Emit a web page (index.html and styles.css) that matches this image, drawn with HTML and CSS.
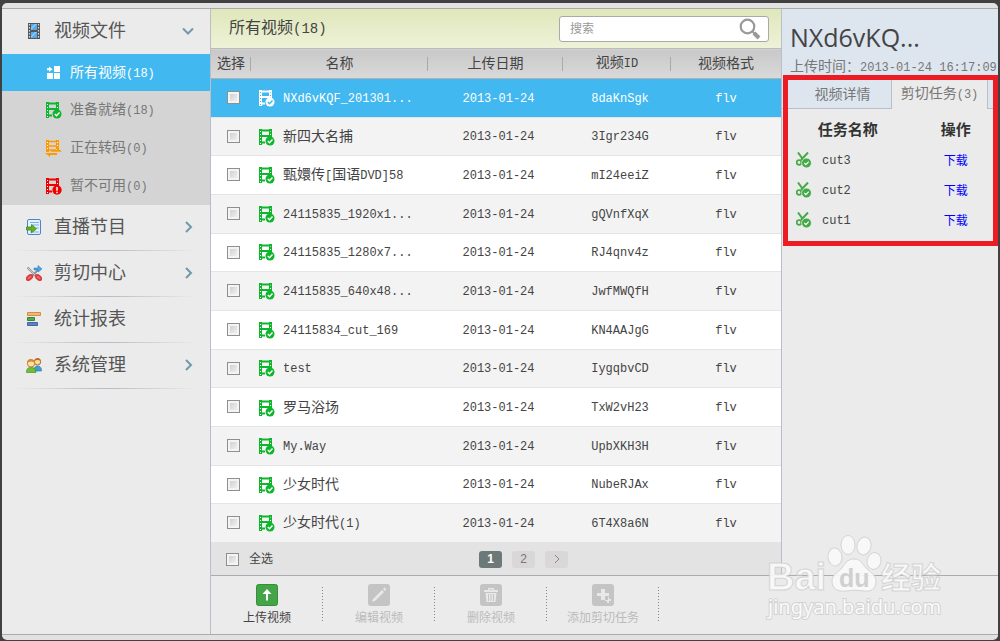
FILE: index.html
```html
<!DOCTYPE html>
<html lang="zh-CN">
  <head>
    <meta charset="UTF-8" />
    <meta name="viewport" content="width=device-width, initial-scale=1.0" />
    <title>视频管理</title>
    <link rel="stylesheet" href="styles.css">
  </head>
  <body>
    <!-- shared icons -->
    <svg class="sprite" width="0" height="0">
      <symbol id="ok" viewBox="0 0 16 17">
        <path d="M1.500 0v16M11.500 0v8" stroke="currentColor" stroke-width="3" fill="none" />
        <path class="holes" d="M1.500 2v13M11.500 2v6" stroke-dasharray="1 2" fill="none" />
        <path d="M2 1.500h10M2 7h9M2.500 13.500h3.500" stroke="currentColor" stroke-width="2" fill="none" />
        <circle class="dot" cx="11" cy="12" r="4.500" />
        <path class="tick" d="M8.800 12l1.700 1.700 3-3.200" stroke-width="1.400" fill="none" />
      </symbol>
      <symbol id="cut" viewBox="0 0 16 16">
        <path d="M2 .5l6.500 9M12 .5L5 8" stroke="#45a94a" stroke-width="2" fill="none" />
        <circle cx="3" cy="10.500" r="2.300" stroke="#45a94a" stroke-width="1.800" fill="none" />
        <circle cx="10.500" cy="11" r="4.900" fill="#45a94a" stroke="#fff" stroke-width=".6" />
        <path d="M8.300 11l1.600 1.600 2.800-3" stroke="#fff" stroke-width="1.200" fill="none" />
      </symbol>
    </svg>

    <div class="window">
      <nav class="sidebar">
        <a class="menu open" href="#">
          <svg width="16" height="16" viewBox="0 0 16 16">
            <path d="M2 0h12v16H2z" fill="#555" />
            <path d="M5 1h6v6H5zM5 9h6v6H5z" fill="#55a9ee" />
            <path d="M5 5l4-4h2L5 7zM5 13l4-4h2l-6 6z" fill="#8fcbfa" />
            <path d="M3.500 1v15M12.500 1v15" stroke="#ddd" stroke-width="1.200" stroke-dasharray="1.500 1.500" />
          </svg>
          <span>视频文件</span>
          <svg class="arrow" width="12" height="12" viewBox="0 0 12 12"><path d="M1 3.500l5 5 5-5" /></svg>
        </a>
        <div class="submenu">
          <a class="active" href="#">
            <svg width="16" height="16" viewBox="0 0 16 16" fill="#fff">
              <path d="M8 1h6v6H8zM1 8h6v6H1zM8 8h6v6H8zM1 3.200h2V1.500L6.500 4.300 3 7V5.300H1z" />
            </svg>
            <span>所有视频<span class="num">(18)</span></span>
          </a>
          <a href="#">
            <svg class="green" width="16" height="17"><use href="#ok" /></svg>
            <span>准备就绪<span class="num">(18)</span></span>
          </a>
          <a href="#">
            <svg class="orange" width="16" height="17" viewBox="0 0 16 17">
              <path d="M1.500 0v12M11.500 0v9" stroke="currentColor" stroke-width="3" />
              <path class="holes" d="M1.500 2v9M11.500 2v6" stroke-dasharray="1 2" />
              <path d="M2 1.500h9M2 6h9M2 10h8" stroke="currentColor" stroke-width="1.600" fill="none" />
              <path d="M5 10h6V7.500l5 4.200H5zM11 15H4v2l-5-4h12z" fill="currentColor" />
            </svg>
            <span>正在转码<span class="num">(0)</span></span>
          </a>
          <a href="#">
            <svg class="red" width="16" height="17" viewBox="0 0 16 17">
              <path d="M1.500 0v16M11.500 0v8" stroke="currentColor" stroke-width="3" />
              <path class="holes" d="M1.500 2v13M11.500 2v6" stroke-dasharray="1 2" />
              <path d="M2 1.500h10M2 7h9M2.500 13.500h3.500" stroke="currentColor" stroke-width="2" />
              <circle cx="11" cy="12" r="4.700" fill="currentColor" />
              <path d="M11 9v3.700M11 13.700v1.500" stroke="#fff" stroke-width="1.500" />
            </svg>
            <span>暂不可用<span class="num">(0)</span></span>
          </a>
        </div>
        <a class="menu" href="#">
          <svg width="16" height="16" viewBox="0 0 16 16">
            <rect x="1.500" y=".5" width="13" height="15" rx="1.500" fill="#e5f2ff" stroke="#4b83cd" />
            <path d="M4 3.500h9M6 6h7M10 9h3M4 13h9" stroke="#7dade2" />
            <path d="M.5 8h5V5.500l5 4.300-5 4V11h-5z" fill="#63b520" stroke="#357b10" stroke-width=".7" />
          </svg>
          <span>直播节目</span>
          <svg class="arrow" width="12" height="12" viewBox="0 0 12 12"><path d="M4 1l5 5-5 5" /></svg>
        </a>
        <a class="menu" href="#">
          <svg width="16" height="16" viewBox="0 0 16 16">
            <path d="M1.500 2.500l9 9M13 4l-8 8" stroke="#8c9298" stroke-width="2" />
            <path d="M2 3l9 9" stroke="#d7dbde" stroke-width=".8" />
            <path d="M8 3h4V.5L16 4l-4 3V5H8z" fill="#4aa5e9" stroke="#2473b5" stroke-width=".5" />
            <ellipse cx="3.500" cy="12.500" rx="3.300" ry="1.900" transform="rotate(-40 3.500 12.500)" fill="#e66" stroke="#d83c3f" stroke-width="1.700" />
            <ellipse cx="12.500" cy="12.500" rx="3.300" ry="1.900" transform="rotate(40 12.500 12.500)" fill="#e66" stroke="#d83c3f" stroke-width="1.700" />
          </svg>
          <span>剪切中心</span>
          <svg class="arrow" width="12" height="12" viewBox="0 0 12 12"><path d="M4 1l5 5-5 5" /></svg>
        </a>
        <a class="menu" href="#">
          <svg width="16" height="16" viewBox="0 0 16 16">
            <path d="M1.500 1.500h13v3h-13z" fill="#efb879" stroke="#d18e46" />
            <path d="M1.500 6.500h7v3h-7z" fill="#59a749" stroke="#3d8532" />
            <path d="M1.500 11.500h10v3h-10z" fill="#5d82c4" stroke="#4167a8" />
          </svg>
          <span>统计报表</span>
        </a>
        <a class="menu" href="#">
          <svg width="16" height="16" viewBox="0 0 16 16">
            <path d="M8 14c0-4 1.500-5 3.500-5s4 1 4 5z" fill="#3f9fd0" stroke="#2376a6" stroke-width=".6" />
            <circle cx="11.500" cy="4.800" r="3.200" fill="#fbdc9c" stroke="#b66b22" />
            <path d="M8.300 4c1-4 6-4 6.500 0-2-1-4-1.500-6.500 0z" fill="#bd6f26" />
            <path d="M.5 15.500c0-4 1.500-5 4.500-5s5 1 5 5z" fill="#6fbc35" stroke="#3e8a18" stroke-width=".6" />
            <circle cx="5" cy="6.300" r="3.700" fill="#ffe3ab" stroke="#c8802c" />
            <path d="M1 6C1 .5 8.500.5 9 6 6.500 4 4 4 1 6z" fill="#d48b35" />
          </svg>
          <span>系统管理</span>
          <svg class="arrow" width="12" height="12" viewBox="0 0 12 12"><path d="M4 1l5 5-5 5" /></svg>
        </a>
      </nav>

      <main class="main">
        <div class="title-bar">
          <h1>所有视频<span>(18)</span></h1>
          <form class="search">
            <input type="search" placeholder="搜索" aria-label="搜索" />
            <button type="button" aria-label="搜索">
              <svg width="22" height="22" viewBox="0 0 22 22" fill="none" stroke="#999">
                <circle cx="8.500" cy="8.500" r="6.800" stroke-width="2.200" />
                <path d="M13 13l2.500 2.500" stroke-width="2" />
                <path d="M15 15l5 5" stroke-width="4" />
              </svg>
            </button>
          </form>
        </div>
        <div class="list">
          <table class="videos">
            <thead>
              <tr>
                <th class="c-check">选择</th>
                <th class="c-name">名称</th>
                <th class="c-date">上传日期</th>
                <th class="c-id">视频<span class="num">ID</span></th>
                <th>视频格式</th>
              </tr>
            </thead>
            <tbody>
              <tr class="selected">
                <td><input type="checkbox" aria-label="NXd6vKQF_201301..." /></td>
                <td class="name"><svg width="16" height="17"><use href="#ok" /></svg><span class="num">NXd6vKQF_201301...</span></td>
                <td class="shift">2013-01-24</td><td class="shift">8daKnSgk</td><td>flv</td>
              </tr>
              <tr>
                <td><input type="checkbox" aria-label="新四大名捕" /></td>
                <td class="name"><svg width="16" height="17"><use href="#ok" /></svg>新四大名捕</td>
                <td class="shift">2013-01-24</td><td class="shift">3Igr234G</td><td>flv</td>
              </tr>
              <tr>
                <td><input type="checkbox" aria-label="甄嬛传[国语DVD]58" /></td>
                <td class="name"><svg width="16" height="17"><use href="#ok" /></svg>甄嬛传<span class="num">[</span>国语<span class="num">DVD]58</span></td>
                <td class="shift">2013-01-24</td><td class="shift">mI24eeiZ</td><td>flv</td>
              </tr>
              <tr>
                <td><input type="checkbox" aria-label="24115835_1920x1..." /></td>
                <td class="name"><svg width="16" height="17"><use href="#ok" /></svg><span class="num">24115835_1920x1...</span></td>
                <td class="shift">2013-01-24</td><td class="shift">gQVnfXqX</td><td>flv</td>
              </tr>
              <tr>
                <td><input type="checkbox" aria-label="24115835_1280x7..." /></td>
                <td class="name"><svg width="16" height="17"><use href="#ok" /></svg><span class="num">24115835_1280x7...</span></td>
                <td class="shift">2013-01-24</td><td class="shift">RJ4qnv4z</td><td>flv</td>
              </tr>
              <tr>
                <td><input type="checkbox" aria-label="24115835_640x48..." /></td>
                <td class="name"><svg width="16" height="17"><use href="#ok" /></svg><span class="num">24115835_640x48...</span></td>
                <td class="shift">2013-01-24</td><td class="shift">JwfMWQfH</td><td>flv</td>
              </tr>
              <tr>
                <td><input type="checkbox" aria-label="24115834_cut_169" /></td>
                <td class="name"><svg width="16" height="17"><use href="#ok" /></svg><span class="num">24115834_cut_169</span></td>
                <td class="shift">2013-01-24</td><td class="shift">KN4AAJgG</td><td>flv</td>
              </tr>
              <tr>
                <td><input type="checkbox" aria-label="test" /></td>
                <td class="name"><svg width="16" height="17"><use href="#ok" /></svg><span class="num">test</span></td>
                <td class="shift">2013-01-24</td><td class="shift">IygqbvCD</td><td>flv</td>
              </tr>
              <tr>
                <td><input type="checkbox" aria-label="罗马浴场" /></td>
                <td class="name"><svg width="16" height="17"><use href="#ok" /></svg>罗马浴场</td>
                <td class="shift">2013-01-24</td><td class="shift">TxW2vH23</td><td>flv</td>
              </tr>
              <tr>
                <td><input type="checkbox" aria-label="My.Way" /></td>
                <td class="name"><svg width="16" height="17"><use href="#ok" /></svg><span class="num">My.Way</span></td>
                <td class="shift">2013-01-24</td><td class="shift">UpbXKH3H</td><td>flv</td>
              </tr>
              <tr>
                <td><input type="checkbox" aria-label="少女时代" /></td>
                <td class="name"><svg width="16" height="17"><use href="#ok" /></svg>少女时代</td>
                <td class="shift">2013-01-24</td><td class="shift">NubeRJAx</td><td>flv</td>
              </tr>
              <tr>
                <td><input type="checkbox" aria-label="少女时代(1)" /></td>
                <td class="name"><svg width="16" height="17"><use href="#ok" /></svg>少女时代<span class="num">(1)</span></td>
                <td class="shift">2013-01-24</td><td class="shift">6T4X8a6N</td><td>flv</td>
              </tr>
            </tbody>
          </table>
        </div>
        <div class="list-footer">
          <label><input type="checkbox" />全选</label>
          <div class="pager">
            <button class="current">1</button>
            <button>2</button>
            <button aria-label="下一页"><svg width="6" height="8" viewBox="0 0 6 8"><path d="M1 0l4 4-4 4" fill="none" stroke="#888" /></svg></button>
          </div>
        </div>
      </main>

      <aside class="detail">
        <div class="detail-head">
          <h2>NXd6vKQ...</h2>
          <p>上传时间：<span class="num">2013-01-24 16:17:09</span></p>
        </div>
        <div class="tabs">
          <button>视频详情</button>
          <button class="current">剪切任务<span class="num">(3)</span></button>
        </div>
        <table class="tasks">
          <thead>
            <tr><th>任务名称</th><th>操作</th></tr>
          </thead>
          <tbody>
            <tr><td><svg width="16" height="16"><use href="#cut" /></svg><span class="num">cut3</span></td><td><a href="#">下载</a></td></tr>
            <tr><td><svg width="16" height="16"><use href="#cut" /></svg><span class="num">cut2</span></td><td><a href="#">下载</a></td></tr>
            <tr><td><svg width="16" height="16"><use href="#cut" /></svg><span class="num">cut1</span></td><td><a href="#">下载</a></td></tr>
          </tbody>
        </table>
        <div class="highlight"></div>
      </aside>

      <div class="toolbar">
        <button>
          <svg width="22" height="22" viewBox="0 0 22 22">
            <rect width="21" height="21" x=".5" y=".5" rx="2" fill="#43a547" stroke="#359139" />
            <path d="M11 5l4.500 5H12v6.500h-2V10H6.500z" fill="#fff" />
          </svg>
          上传视频
        </button>
        <button disabled>
          <svg width="22" height="22" viewBox="0 0 22 22">
            <rect width="22" height="22" rx="3" fill="#c4c4c4" />
            <path d="M4 18l1-3 9-9 2 2-9 9zM15 5l1.500-1.500 2 2L17 7z" fill="#e8e8e8" />
          </svg>
          编辑视频
        </button>
        <button disabled>
          <svg width="22" height="22" viewBox="0 0 22 22">
            <rect width="22" height="22" rx="3" fill="#c4c4c4" />
            <path d="M4 6h4V4h6v2h4v2H4zM9.500 5.300V6h3v-.7zM5.500 9h11l-1 9h-9z" fill="#e8e8e8" fill-rule="evenodd" />
            <path d="M8.500 10v7M11 10v7M13.500 10v7" stroke="#c4c4c4" />
          </svg>
          删除视频
        </button>
        <button disabled>
          <svg width="22" height="22" viewBox="0 0 22 22">
            <rect width="22" height="22" rx="3" fill="#c4c4c4" />
            <path d="M9 5h4v4h4v3h-4v4H9v-4H5V9h4zM16 13h1v2h2v2h-2v2h-2v-2h-2v-1h3z" fill="#e8e8e8" />
          </svg>
          添加剪切任务
        </button>
      </div>

      <div class="watermark">
        <svg width="182" height="90" viewBox="0 0 182 90">
          <g class="mark">
            <text class="latin" x="0" y="56">Bai</text>
            <ellipse cx="68" cy="23" rx="7" ry="9" transform="rotate(-8 68 23)" />
            <ellipse cx="81" cy="11" rx="7" ry="9.500" />
            <ellipse cx="97" cy="12" rx="7" ry="9" transform="rotate(12 97 12)" />
            <ellipse cx="107" cy="27" rx="7" ry="8.500" transform="rotate(12 107 27)" />
            <path d="M87 25c7 0 8 5 13 10 5 4 9 7 9 12 0 8-5 11-12 10-7-1-11-1-18 0-8 1-14-2-14-10 0-6 5-8 9-12 4-5 6-10 13-10z" />
            <text class="cjk" x="114" y="54">经验</text>
          </g>
          <text class="url" x="1" y="80">jingyan.baidu.com</text>
          <text class="du" x="72" y="53">du</text>
        </svg>
      </div>
    </div>
  </body>
</html>
```

FILE: styles.css
```css
* {
  box-sizing: border-box;
}
body {
  margin: 0;
  padding: 3px 2px 1px;
  min-height: 100vh;
  display: flex;
  background: #414141;
  color: #444;
  font-family: "Liberation Sans", "Noto Sans CJK SC", sans-serif;
  font-size: 14px;
  line-height: 20px;
}
h1, h2, p {
  margin: 0;
  font-weight: normal;
}
a {
  text-decoration: none;
}
button {
  border: none;
  padding: 0;
  background: none;
  color: inherit;
  font: inherit;
  cursor: pointer;
}
table {
  border-collapse: collapse;
}
.sprite {
  position: absolute;
}
.num {
  font-family: "Liberation Mono", monospace;
  font-size: 12px;
}
.window {
  position: relative;
  flex: 1;
  display: grid;
  grid-template-columns: 209px 1fr 217px;
  grid-template-rows: 1fr 59px;
  border-top: 5px solid #e2e2e2;
  border-bottom: 5px solid #e2e2e2;
  border-radius: 5px;
  background: #ebebeb;
  box-shadow: inset 0 1px #aaa, inset 0 -1px #aaa;
  padding: 1px 0;
}

/* sidebar */
.sidebar {
  grid-row: 1 / 3;
  border-right: 1px solid #b8bfc8;
}
.menu {
  display: flex;
  align-items: center;
  height: 46px;
  padding: 0 16px 2px 24px;
  background: radial-gradient(closest-side, #b4bbc5, #ebebeb) center bottom / 184px 1px no-repeat;
  color: #555;
  font-size: 18px;
}
.menu.open {
  height: 45px;
  background: none;
}
.menu span {
  flex: 1;
  padding-left: 12px;
}
.arrow path {
  fill: none;
  stroke: #6f9aaa;
  stroke-width: 2;
}
.submenu {
  background: #d4d4d4;
}
.submenu a {
  display: flex;
  align-items: center;
  gap: 8px;
  height: 38px;
  padding-left: 44px;
  color: #777;
}
.submenu .active {
  height: 37px;
  background: #41b8f0;
  color: #fff;
}
.green {
  color: #0fb52c;
}
.orange {
  color: #ff9900;
  overflow: visible;
}
.red {
  color: #f00000;
}
.dot {
  fill: currentColor;
}
.tick,
.holes {
  stroke: #fff;
}

/* video list */
.main {
  display: flex;
  flex-direction: column;
}
.title-bar {
  display: flex;
  align-items: center;
  justify-content: space-between;
  height: 39px;
  padding: 0 12px 0 18px;
  background: linear-gradient(#dfe7ba, #eef2d8);
}
.title-bar h1 {
  font-size: 16px;
}
.title-bar h1 span {
  font-family: "Liberation Mono", monospace;
  font-size: 14px;
}
.search {
  display: flex;
  align-items: center;
  width: 210px;
  height: 26px;
  padding: 0 7px 0 10px;
  border: 1px solid #aaa;
  border-radius: 3px;
  background: #fff;
}
.search input {
  flex: 1;
  min-width: 0;
  border: none;
  padding: 0;
  outline: none;
  background: none;
  font: inherit;
  font-size: 12px;
}
.search input::placeholder {
  color: #999;
}
.search button {
  height: 22px;
}
.list {
  flex: 1;
}
.videos {
  width: 100%;
  height: 100%;
  table-layout: fixed;
}
.videos th {
  height: 30px;
  padding: 0 0 2px;
  border-top: 1px solid #bbb;
  border-bottom: 1px solid #b0b0b0;
  background: linear-gradient(#aaa, #aaa) right center / 1px 14px no-repeat, linear-gradient(#c8c8c8, #d9d9d9);
  font-weight: normal;
}
.videos th:last-child {
  background: linear-gradient(#c8c8c8, #d9d9d9);
}
.c-check {
  width: 40px;
}
.c-name {
  width: 177px;
}
.c-date {
  width: 135px;
}
.c-id {
  width: 108px;
}
.videos td {
  height: 38px;
  padding: 2px 0 0;
  border-bottom: 1px solid #e4e4e4;
  background: #fff;
  font-family: "Liberation Mono", monospace;
  font-size: 12px;
  text-align: center;
  white-space: nowrap;
}
.videos tr:nth-child(even) td {
  background: #f3f3f3;
}
.videos td:first-child {
  padding: 0 0 0 5px;
}
.videos td.shift {
  padding-left: 6px;
}
.videos td.name {
  padding: 0 0 0 8px;
  text-align: left;
  font-family: "Liberation Sans", "Noto Sans CJK SC", sans-serif;
  font-size: 14px;
}
.videos .name svg {
  margin-right: 8px;
  vertical-align: middle;
  color: #0fb52c;
}
.videos .selected td {
  background: #41b8f0;
  color: #fff;
}
.videos .selected svg {
  color: #fff;
}
.selected svg {
  --mark: #41b8f0;
}
.tick,
.holes {
  stroke: var(--mark, #fff);
}
input[type="checkbox"] {
  appearance: none;
  width: 13px;
  height: 13px;
  margin: 0;
  border: 1px solid #8f8f8f;
  background: linear-gradient(135deg, #c5c9cf, #f8f8f8);
  box-shadow: inset 0 0 0 2px #f4f4f4;
  vertical-align: middle;
}
.list-footer {
  display: flex;
  align-items: center;
  height: 32px;
  padding-left: 15px;
  background: #e3e3e3;
}
.list-footer label {
  display: flex;
  align-items: center;
  gap: 10px;
  width: 253px;
  font-size: 12px;
}
.pager {
  display: flex;
  gap: 10px;
}
.pager button {
  width: 23px;
  height: 17px;
  border-radius: 3px;
  background: #d9d7d7;
  color: #777;
  font-size: 12px;
  line-height: 17px;
}
.pager .current {
  background: #6d7978;
  color: #fff;
  font-weight: bold;
}

/* right panel */
.detail {
  position: relative;
  border-left: 1px solid #b8bfc8;
}
.detail-head {
  height: 70px;
  padding: 12px 0 0 8px;
  background: #dde5ef;
  white-space: nowrap;
}
.detail-head h2 {
  font-family: "Open Sans", sans-serif;
  font-size: 25px;
  line-height: 32px;
}
.detail-head p {
  line-height: 26px;
  color: #777;
}
.tabs {
  display: flex;
  height: 30px;
  background: #dde5ef;
  color: #777;
  box-shadow: inset 0 -1px #b8bfc8;
}
.tabs button {
  width: 110px;
  padding-left: 12px;
  border-right: 1px solid #b8bfc8;
}
.tabs .current {
  width: 96px;
  padding: 0;
  background: #ebebeb;
}
.tasks {
  width: 100%;
  margin-top: 5px;
}
.tasks th {
  height: 31px;
  padding: 0;
  color: #333;
  font-size: 15px;
}
.tasks th:first-child {
  width: 61%;
}
.tasks td {
  height: 30px;
  padding: 0 0 0 14px;
}
.tasks td svg {
  margin-right: 10px;
  vertical-align: middle;
}
.tasks td:last-child {
  padding: 0;
  text-align: center;
}
.tasks a {
  color: #0000ff;
  font-size: 12px;
}
.highlight {
  position: absolute;
  top: 66px;
  left: 1px;
  right: 0;
  height: 171px;
  border: 5px solid #ed1c24;
  pointer-events: none;
}

/* bottom actions */
.toolbar {
  grid-column: 2 / 4;
  display: flex;
  border-top: 1px solid #aaaab0;
}
.toolbar button {
  display: flex;
  flex-direction: column;
  align-items: center;
  width: 112px;
  padding-top: 8px;
  gap: 2px;
  background: repeating-linear-gradient(#888 0 1px, transparent 1px 3px) right 11px / 1px 35px no-repeat;
  font-size: 12px;
}
.toolbar button:disabled {
  color: #bbb;
}

.watermark {
  position: absolute;
  right: 49px;
  bottom: 11px;
  pointer-events: none;
}
.watermark svg {
  display: block;
  overflow: visible;
}
.mark {
  fill: #fafafa;
  stroke: #d2d2d2;
  stroke-width: 1;
  opacity: 0.9;
}
.latin,
.du {
  font: bold 38px "Liberation Sans", sans-serif;
}
.du {
  font-size: 25px;
  fill: #d0d0d0;
}
.cjk {
  font: bold 30px "Noto Sans CJK SC", sans-serif;
}
.url {
  font: 20px "Noto Sans", sans-serif;
  fill: #fafafa;
  stroke: #d2d2d2;
  stroke-width: 2px;
  paint-order: stroke;
}
```
